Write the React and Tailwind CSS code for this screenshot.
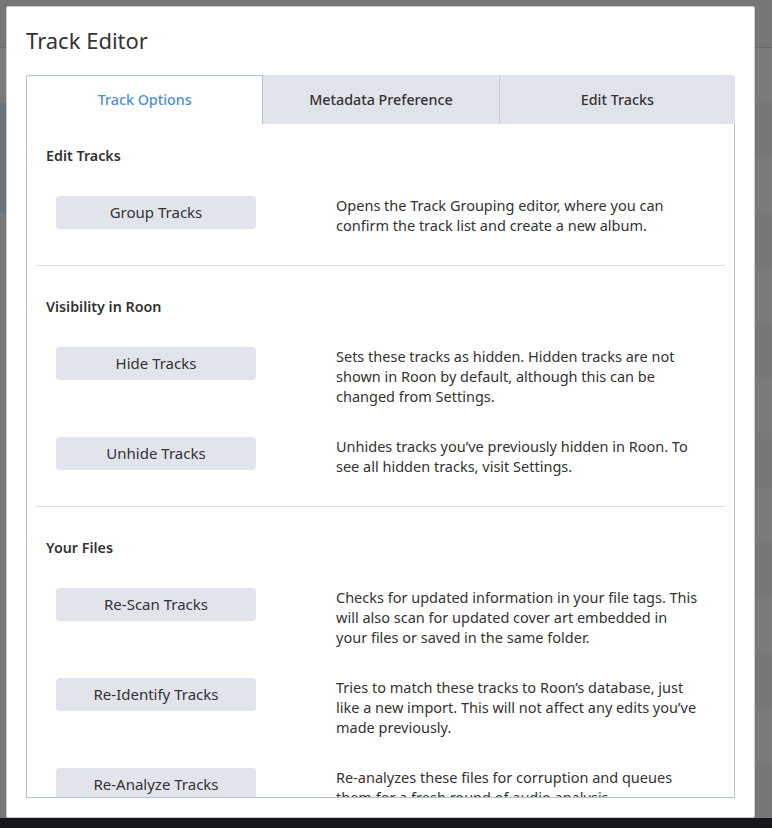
import React from "react";

const font = { fontFamily: '"Noto Sans", "Open Sans", sans-serif' };

function ActionRow({ label, children }) {
  return (
    <div className="flex items-start pl-[29px]">
      <button className="w-[200px] h-[33px] shrink-0 rounded-[4px] bg-[#e1e4eb] pb-[2px] text-[15px] font-normal text-[#333] leading-5">
        {label}
      </button>
      <p className="ml-[80px] -mt-px pb-px w-[364px] text-[14.5px] leading-5 text-[#333]">{children}</p>
    </div>
  );
}

function Section({ title, first, last, children }) {
  return (
    <div className={first ? "pt-[22px]" : "pt-[31px]"}>
      <h3 className="pl-[19px] text-[14.3px] leading-5 font-semibold text-[#333]">{title}</h3>
      <div className="mt-[30px] flex flex-col gap-[30px]">{children}</div>
      {!last && <div className="mt-[29px] mx-[9px] h-px bg-[#dcdde0]" />}
    </div>
  );
}

export default function App() {
  const bands = Array.from({ length: 14 });
  return (
    <div className="relative w-full h-[828px] overflow-hidden bg-[#7a7a7a] flex flex-col" style={font}>
      <div className="h-[48px] shrink-0 bg-[#767676] border-b border-[#646a70]" />
      <div className="flex-1 flex overflow-hidden">
        <div className="w-[8px] shrink-0 flex flex-col">
          <div className="h-[55px] bg-[#7a7a7a]" />
          <div className="h-[110px] bg-[#6b747e]" />
          <div className="flex-1 bg-[#797979]" />
        </div>
        <div className="flex-1 flex flex-col">
          {bands.map((_, i) => (
            <div key={i} className={i % 2 === 0 ? "h-[55px] shrink-0 bg-[#7b7b7b]" : "h-[55px] shrink-0 bg-[#777777]"} />
          ))}
        </div>
      </div>
      <div className="h-[10px] shrink-0 bg-[#16171b]" />

      <div className="absolute left-[6px] top-[6px] w-[749px] h-[812px] bg-white border border-[#c6cdd6] rounded-[2px] flex flex-col px-[19px] pt-[19px] pb-[19px]">
        <h1 className="text-[22px] leading-[28px] text-[#333] font-normal">Track Editor</h1>
        <div className="mt-[21px] flex h-[49px] shrink-0 relative z-10 -mb-px">
          <div className="flex-1 flex items-center justify-center bg-white border border-b-0 border-[#b7c2cf] rounded-tl-[3px] text-[14.3px] font-medium text-[#4a90d9]">
            Track Options
          </div>
          <div className="flex-1 flex items-center justify-center bg-[#e1e3ea] border-t border-[#e1e3ea] text-[14.3px] font-medium text-[#333]">
            Metadata Preference
          </div>
          <div className="flex-1 flex items-center justify-center bg-[#e1e3ea] border-l border-[#c3cbd5] rounded-tr-[3px] text-[14.3px] font-medium text-[#333]">
            Edit Tracks
          </div>
        </div>
        <div className="flex-1 border border-[#b7c2cf] overflow-hidden">
          <Section title="Edit Tracks" first>
            <ActionRow label="Group Tracks">
              Opens the Track Grouping editor, where you can confirm the track list and create a new album.
            </ActionRow>
          </Section>
          <Section title="Visibility in Roon">
            <ActionRow label="Hide Tracks">
              Sets these tracks as hidden. Hidden tracks are not shown in Roon by default, although this can be changed from Settings.
            </ActionRow>
            <ActionRow label="Unhide Tracks">
              Unhides tracks you’ve previously hidden in Roon. To see all hidden tracks, visit Settings.
            </ActionRow>
          </Section>
          <Section title="Your Files" last>
            <ActionRow label="Re-Scan Tracks">
              Checks for updated information in your file tags. This will also scan for updated cover art embedded in your files or saved in the same folder.
            </ActionRow>
            <ActionRow label="Re-Identify Tracks">
              Tries to match these tracks to Roon’s database, just like a new import. This will not affect any edits you’ve made previously.
            </ActionRow>
            <ActionRow label="Re-Analyze Tracks">
              Re-analyzes these files for corruption and queues them for a fresh round of audio analysis.
            </ActionRow>
          </Section>
        </div>
      </div>
    </div>
  );
}
